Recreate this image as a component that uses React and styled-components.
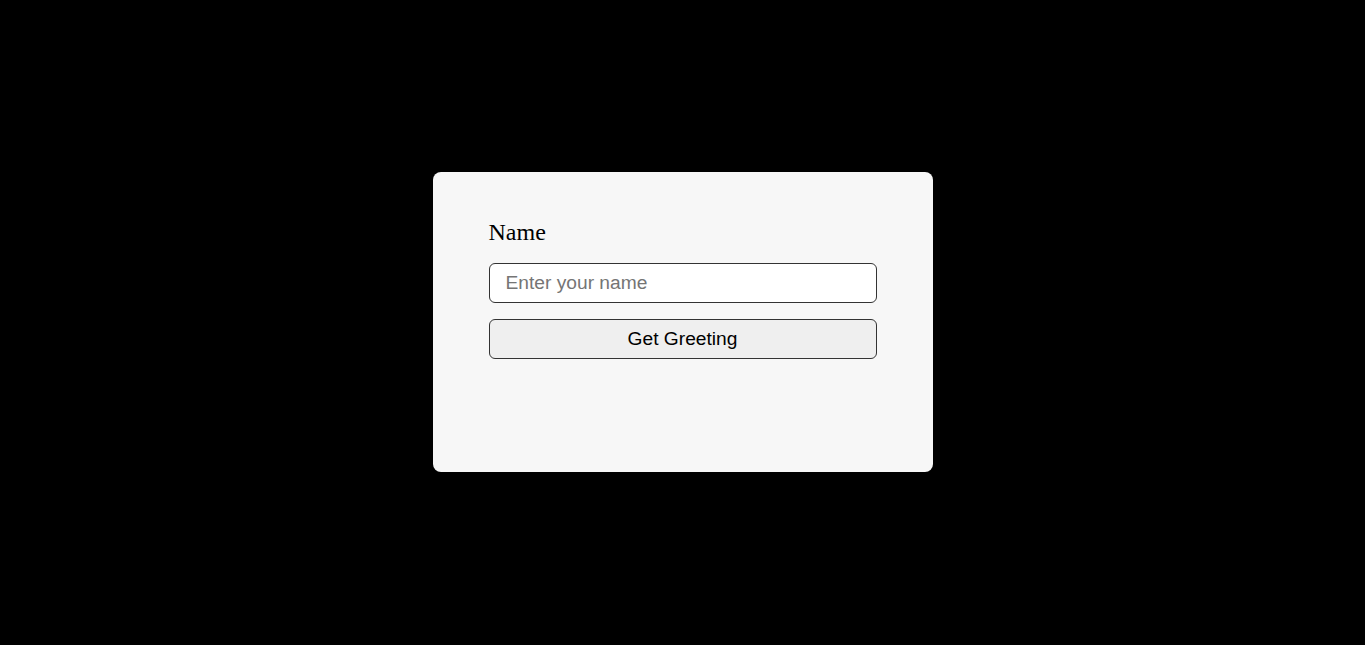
import React from "react";
import styled, { createGlobalStyle } from "styled-components";

const Global = createGlobalStyle`
  html, body { margin: 0; padding: 0; background: #000; }
  * { box-sizing: border-box; }
`;

const Page = styled.div`
  min-height: calc(100vh - 1px);
  display: flex;
  align-items: center;
  justify-content: center;
  background: #000;
`;

const Card = styled.div`
  width: 500px;
  height: 300px;
  background: #f7f7f7;
  border-radius: 8px;
  padding: 46px 56px;
  display: flex;
  flex-direction: column;
`;

const Label = styled.label`
  font-family: "Liberation Serif", "Times New Roman", serif;
  font-size: 24px;
  color: #000;
  line-height: 28px;
  margin-bottom: 17px;
`;

const Input = styled.input`
  height: 40px;
  width: 100%;
  border: 1px solid #333;
  border-radius: 6px;
  background: #fff;
  padding: 0 16px;
  font-family: "Liberation Sans", Arial, sans-serif;
  font-size: 19.2px;
  color: #000;
  outline: none;
  &::placeholder { color: #757575; }
`;

const Button = styled.button`
  margin-top: 16px;
  height: 40px;
  width: 100%;
  border: 1px solid #333;
  border-radius: 6px;
  background: #efefef;
  font-family: "Liberation Sans", Arial, sans-serif;
  font-size: 19.2px;
  color: #000;
  cursor: pointer;
`;

export default function App() {
  return (
    <>
      <Global />
      <Page>
        <Card>
          <Label htmlFor="name">Name</Label>
          <Input id="name" placeholder="Enter your name" />
          <Button>Get Greeting</Button>
        </Card>
      </Page>
    </>
  );
}
